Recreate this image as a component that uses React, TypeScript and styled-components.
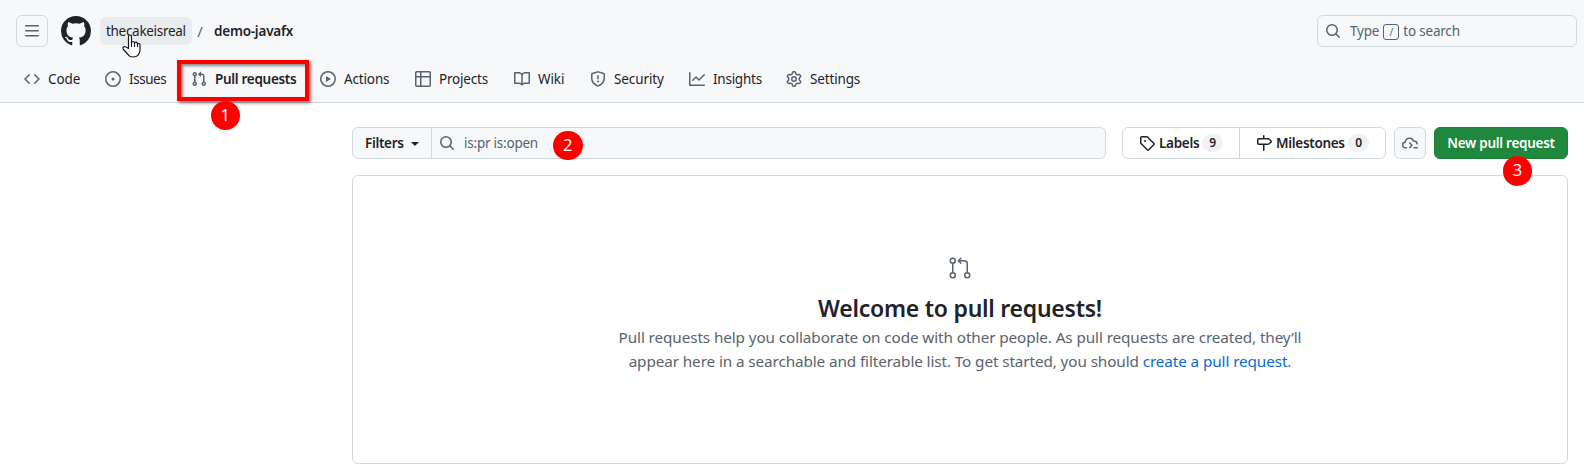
import React from 'react';
import styled, { createGlobalStyle } from 'styled-components';
import { GoGitPullRequest } from 'react-icons/go';

const GlobalStyle = createGlobalStyle`
  * { box-sizing: border-box; }
  body {
    margin: 0;
    background: #fff;
    color: #1f2328;
    font: 13.5px/21px "Noto Sans", "Open Sans", sans-serif;
    overflow: hidden;
  }
`;

const paths = {
  bars: 'M1 2.75A.75.75 0 0 1 1.75 2h12.5a.75.75 0 0 1 0 1.5H1.75A.75.75 0 0 1 1 2.75Zm0 5A.75.75 0 0 1 1.75 7h12.5a.75.75 0 0 1 0 1.5H1.75A.75.75 0 0 1 1 7.75ZM1.75 12h12.5a.75.75 0 0 1 0 1.5H1.75a.75.75 0 0 1 0-1.5Z',
  github: 'M8 0c4.42 0 8 3.58 8 8a8.013 8.013 0 0 1-5.45 7.59c-.4.08-.55-.17-.55-.38 0-.27.01-1.13.01-2.2 0-.75-.25-1.23-.54-1.48 1.78-.2 3.65-.88 3.65-3.95 0-.88-.31-1.59-.82-2.15.08-.2.36-1.02-.08-2.12 0 0-.67-.22-2.2.82-.64-.18-1.32-.27-2-.27-.68 0-1.36.09-2 .27-1.53-1.03-2.2-.82-2.2-.82-.44 1.1-.16 1.92-.08 2.12-.51.56-.82 1.28-.82 2.15 0 3.06 1.86 3.75 3.64 3.95-.23.2-.44.55-.51 1.07-.46.21-1.61.55-2.33-.66-.15-.24-.6-.83-1.23-.82-.67.01-.27.38.01.53.34.19.73.9.82 1.13.16.45.68 1.31 2.69.94 0 .67.01 1.3.01 1.49 0 .21-.15.45-.55.38A7.995 7.995 0 0 1 0 8c0-4.42 3.58-8 8-8Z',
  code: 'm11.28 3.22 4.25 4.25a.75.75 0 0 1 0 1.06l-4.25 4.25a.749.749 0 0 1-1.275-.326.749.749 0 0 1 .215-.734L13.94 8l-3.72-3.72a.749.749 0 0 1 .326-1.275.749.749 0 0 1 .734.215Zm-6.56 0a.751.751 0 0 1 1.042.018.751.751 0 0 1 .018 1.042L2.06 8l3.72 3.72a.749.749 0 0 1-.326 1.275.749.749 0 0 1-.734-.215L.47 8.53a.75.75 0 0 1 0-1.06Z',
  issue: 'M8 9.5a1.5 1.5 0 1 0 0-3 1.5 1.5 0 0 0 0 3ZM8 0a8 8 0 1 1 0 16A8 8 0 0 1 8 0ZM1.5 8a6.5 6.5 0 1 0 13 0 6.5 6.5 0 0 0-13 0Z',
  pull: 'M1.5 3.25a2.25 2.25 0 1 1 3 2.122v5.256a2.251 2.251 0 1 1-1.5 0V5.372A2.25 2.25 0 0 1 1.5 3.25Zm5.677-.177L9.573.677A.25.25 0 0 1 10 .854V2.5h1A2.5 2.5 0 0 1 13.5 5v5.628a2.251 2.251 0 1 1-1.5 0V5a1 1 0 0 0-1-1h-1v1.646a.25.25 0 0 1-.427.177L7.177 3.427a.25.25 0 0 1 0-.354ZM3.75 2.5a.75.75 0 1 0 0 1.5.75.75 0 0 0 0-1.5Zm0 9.5a.75.75 0 1 0 0 1.5.75.75 0 0 0 0-1.5Zm8.25.75a.75.75 0 1 0 1.5 0 .75.75 0 0 0-1.5 0Z',
  play: 'M8 0a8 8 0 1 1 0 16A8 8 0 0 1 8 0ZM1.5 8a6.5 6.5 0 1 0 13 0 6.5 6.5 0 0 0-13 0Zm4.879-2.773 4.264 2.559a.25.25 0 0 1 0 .428l-4.264 2.559A.25.25 0 0 1 6 10.559V5.442a.25.25 0 0 1 .379-.215Z',
  table: 'M0 1.75C0 .784.784 0 1.75 0h12.5C15.216 0 16 .784 16 1.75v12.5A1.75 1.75 0 0 1 14.25 16H1.75A1.75 1.75 0 0 1 0 14.25ZM6.5 6.5v8h7.75a.25.25 0 0 0 .25-.25V6.5Zm8-1.5V1.75a.25.25 0 0 0-.25-.25H6.5V5Zm-13 1.5v7.75c0 .138.112.25.25.25H5v-8ZM5 5V1.5H1.75a.25.25 0 0 0-.25.25V5Z',
  book: 'M0 1.75A.75.75 0 0 1 .75 1h4.253c1.227 0 2.317.59 3 1.501A3.743 3.743 0 0 1 11.006 1h4.245a.75.75 0 0 1 .75.75v10.5a.75.75 0 0 1-.75.75h-4.507a2.25 2.25 0 0 0-1.591.659l-.622.621a.75.75 0 0 1-1.06 0l-.622-.621A2.25 2.25 0 0 0 5.258 13H.75a.75.75 0 0 1-.75-.75Zm7.251 10.324.004-5.073-.002-2.253A2.25 2.25 0 0 0 5.003 2.5H1.5v9h3.757a3.75 3.75 0 0 1 1.994.574ZM8.755 4.75l-.004 7.322a3.752 3.752 0 0 1 1.992-.572H14.5v-9h-3.495a2.25 2.25 0 0 0-2.25 2.25Z',
  shield: 'M7.467.133a1.748 1.748 0 0 1 1.066 0l5.25 1.68A1.75 1.75 0 0 1 15 3.48V7c0 1.566-.32 3.182-1.303 4.682-.983 1.498-2.585 2.813-5.032 3.855a1.697 1.697 0 0 1-1.33 0c-2.447-1.042-4.049-2.357-5.032-3.855C1.32 10.182 1 8.566 1 7V3.48a1.75 1.75 0 0 1 1.217-1.667Zm.61 1.429a.25.25 0 0 0-.153 0l-5.25 1.68a.25.25 0 0 0-.174.238V7c0 1.358.275 2.666 1.057 3.86.784 1.194 2.121 2.34 4.366 3.297a.196.196 0 0 0 .154 0c2.245-.956 3.582-2.104 4.366-3.298C13.225 9.666 13.5 8.36 13.5 7V3.48a.251.251 0 0 0-.174-.237l-5.25-1.68ZM8.75 4.75v3a.75.75 0 0 1-1.5 0v-3a.75.75 0 0 1 1.5 0ZM9 10.5a1 1 0 1 1-2 0 1 1 0 0 1 2 0Z',
  graph: 'M1.5 1.75V13.5h13.75a.75.75 0 0 1 0 1.5H.75a.75.75 0 0 1-.75-.75V1.75a.75.75 0 0 1 1.5 0Zm14.28 2.53-5.25 5.25a.75.75 0 0 1-1.06 0L7 7.06 4.28 9.78a.751.751 0 0 1-1.042-.018.751.751 0 0 1-.018-1.042l3.25-3.25a.75.75 0 0 1 1.06 0L10 7.94l4.72-4.72a.751.751 0 0 1 1.042.018.751.751 0 0 1 .018 1.042Z',
  gear: 'M8 0a8.2 8.2 0 0 1 .701.031C9.444.095 9.99.645 10.16 1.29l.288 1.107c.018.066.079.158.212.224.231.114.454.243.668.386.123.082.233.09.299.071l1.103-.303c.644-.176 1.392.021 1.82.63.27.385.506.792.704 1.218.315.675.111 1.422-.364 1.891l-.814.806c-.049.048-.098.147-.088.294.016.257.016.515 0 .772-.01.147.038.246.088.294l.814.806c.475.469.679 1.216.364 1.891a7.977 7.977 0 0 1-.704 1.217c-.428.61-1.176.807-1.82.63l-1.102-.302c-.067-.019-.177-.011-.3.071a5.909 5.909 0 0 1-.668.386c-.133.066-.194.158-.211.224l-.29 1.106c-.168.646-.715 1.196-1.458 1.26a8.006 8.006 0 0 1-1.402 0c-.743-.064-1.289-.614-1.458-1.26l-.289-1.106c-.018-.066-.079-.158-.212-.224a5.738 5.738 0 0 1-.668-.386c-.123-.082-.233-.09-.299-.071l-1.103.303c-.644.176-1.392-.021-1.82-.63a8.12 8.12 0 0 1-.704-1.218c-.315-.675-.111-1.422.363-1.891l.815-.806c.05-.048.098-.147.088-.294a6.214 6.214 0 0 1 0-.772c.01-.147-.038-.246-.088-.294l-.815-.806C.635 6.045.431 5.298.746 4.623a7.92 7.92 0 0 1 .704-1.217c.428-.61 1.176-.807 1.82-.63l1.102.302c.067.019.177.011.3-.071.214-.143.437-.272.668-.386.133-.066.194-.158.211-.224l.29-1.106C6.009.645 6.556.095 7.299.03 7.53.01 7.764 0 8 0Zm-.571 1.525c-.036.003-.108.036-.137.146l-.289 1.105c-.147.561-.549.967-.998 1.189-.173.086-.34.183-.5.29-.417.278-.97.423-1.529.27l-1.103-.303c-.109-.03-.175.016-.195.045-.22.312-.412.644-.573.99-.014.031-.021.11.059.19l.815.806c.411.406.562.957.53 1.456a4.709 4.709 0 0 0 0 .582c.032.499-.119 1.05-.53 1.456l-.815.806c-.081.08-.073.159-.059.19.162.346.353.677.573.989.02.03.085.076.195.046l1.102-.303c.56-.153 1.113-.008 1.53.27.161.107.328.204.501.29.447.222.85.629.997 1.189l.289 1.105c.029.109.101.143.137.146a6.6 6.6 0 0 0 1.142 0c.036-.003.108-.036.137-.146l.289-1.105c.147-.561.549-.967.998-1.189.173-.086.34-.183.5-.29.417-.278.97-.423 1.529-.27l1.103.303c.109.029.175-.016.195-.045.22-.313.411-.644.573-.99.014-.031.021-.11-.059-.19l-.815-.806c-.411-.406-.562-.957-.53-1.456a4.709 4.709 0 0 0 0-.582c-.032-.499.119-1.05.53-1.456l.815-.806c.081-.08.073-.159.059-.19a6.464 6.464 0 0 0-.573-.989c-.02-.03-.085-.076-.195-.046l-1.102.303c-.56.153-1.113.008-1.53-.27a4.44 4.44 0 0 0-.501-.29c-.447-.222-.85-.629-.997-1.189l-.289-1.105c-.029-.11-.101-.143-.137-.146a6.6 6.6 0 0 0-1.142 0ZM11 8a3 3 0 1 1-6 0 3 3 0 0 1 6 0ZM9.5 8a1.5 1.5 0 1 0-3.001.001A1.5 1.5 0 0 0 9.5 8Z',
  search: 'M10.68 11.74a6 6 0 0 1-7.922-8.982 6 6 0 0 1 8.982 7.922l3.04 3.04a.749.749 0 0 1-.326 1.275.749.749 0 0 1-.734-.215ZM11.5 7a4.499 4.499 0 1 0-8.997 0A4.499 4.499 0 0 0 11.5 7Z',
  tag: 'M1 7.775V2.75C1 1.784 1.784 1 2.75 1h5.025c.464 0 .91.184 1.238.513l6.25 6.25a1.75 1.75 0 0 1 0 2.474l-5.026 5.026a1.75 1.75 0 0 1-2.474 0l-6.25-6.25A1.752 1.752 0 0 1 1 7.775Zm1.5 0c0 .066.026.13.073.177l6.25 6.25a.25.25 0 0 0 .354 0l5.025-5.025a.25.25 0 0 0 0-.354l-6.25-6.25a.25.25 0 0 0-.177-.073H2.75a.25.25 0 0 0-.25.25ZM6 5a1 1 0 1 1 0 2 1 1 0 0 1 0-2Z',
  milestone: 'M7.75 0a.75.75 0 0 1 .75.75V3h3.634c.414 0 .814.147 1.13.414l2.07 1.75a1.75 1.75 0 0 1 0 2.672l-2.07 1.75a1.75 1.75 0 0 1-1.13.414H8.5v5.25a.75.75 0 0 1-1.5 0V10H2.75A1.75 1.75 0 0 1 1 8.25v-3.5C1 3.784 1.784 3 2.75 3H7V.75A.75.75 0 0 1 7.75 0Zm4.384 8.5a.25.25 0 0 0 .161-.06l2.07-1.75a.248.248 0 0 0 0-.38l-2.07-1.75a.25.25 0 0 0-.161-.06H2.75a.25.25 0 0 0-.25.25v3.5c0 .138.112.25.25.25h9.384Z',
  caret: 'm4.427 7.427 3.396 3.396a.25.25 0 0 0 .354 0l3.396-3.396A.25.25 0 0 0 11.396 7H4.604a.25.25 0 0 0-.177.427Z',
};

type IconName = keyof typeof paths;

const Svg = styled.svg`
  display: block;
  flex: none;
`;

const Icon = ({ name, size = 16 }: { name: IconName; size?: number }) => (
  <Svg width={size} height={size} viewBox="0 0 16 16" fill="currentColor">
    <path d={paths[name]} />
  </Svg>
);

const Header = styled.header`
  height: 103px;
  background: #f6f8fa;
  border-bottom: 1px solid #d1d9e0;
`;

const TopBar = styled.div`
  display: flex;
  align-items: center;
  height: 62px;
  padding: 0 7px 0 16px;
`;

const SquareButton = styled.button`
  display: flex;
  align-items: center;
  justify-content: center;
  flex: none;
  width: 32px;
  height: 32px;
  padding: 0;
  border: 1px solid #d1d9e0;
  border-radius: 6px;
  background: #f6f8fa;
  color: #59636e;
`;

const Logo = styled.a`
  margin: 0 9px 0 12px;
  padding-left: 1px;
`;

const Owner = styled.a`
  position: relative;
  width: 92px;
  height: 28px;
  padding: 0 6px;
  border-radius: 6px;
  background: #e9ecef;
  line-height: 29px;
  white-space: nowrap;
  letter-spacing: -0.3px;
`;

const Slash = styled.span`
  width: 22px;
  text-align: center;
  color: #59636e;
  padding-right: 6px;
  font-size: 15px;
`;

const Repo = styled.a`
  font-weight: 600;
  letter-spacing: -0.22px;
  white-space: nowrap;
`;

const Pointer = styled.svg`
  position: absolute;
  left: 22px;
  top: 17px;
`;

const GlobalSearch = styled.div`
  display: flex;
  align-items: center;
  width: 260px;
  height: 32px;
  margin-left: auto;
  padding: 0 7px;
  border: 1px solid #d1d9e0;
  border-radius: 6px;
  color: #59636e;
  letter-spacing: -0.2px;
  white-space: pre;
`;

const SearchHint = styled.span`
  display: flex;
  align-items: center;
  margin-left: 9px;
`;

const Key = styled.kbd`
  width: 16px;
  height: 16px;
  margin: 1px 4px 0;
  border: 1px solid #59636e;
  border-radius: 3px;
  font: 10px/14px "Noto Sans", sans-serif;
  text-align: center;
`;

const Nav = styled.nav`
  display: flex;
  gap: 8px;
  height: 34px;
  padding: 0 16px;
  align-items: center;
`;

const Tab = styled.a<{ $active?: boolean }>`
  position: relative;
  display: flex;
  align-items: center;
  gap: 8px;
  height: 32px;
  padding: 0 8px;
  font-weight: ${(p) => (p.$active ? 600 : 400)};
  svg { color: #59636e; }
`;

const TabLabel = styled.span<{ $width: number; $spacing: number }>`
  width: ${(p) => p.$width}px;
  letter-spacing: ${(p) => p.$spacing}px;
  white-space: nowrap;
`;

const Highlight = styled.span`
  position: absolute;
  left: -6px;
  top: -3px;
  width: 132px;
  height: 41px;
  border: 4px solid #f00;
  box-shadow: 2px 2px 3px rgba(0, 0, 0, 0.5), inset 2px 2px 3px rgba(0, 0, 0, 0.45);
`;

const Step = styled.span<{ $x: number; $y: number }>`
  position: absolute;
  left: ${(p) => p.$x}px;
  top: ${(p) => p.$y}px;
  z-index: 2;
  width: 29.5px;
  height: 29.5px;
  border-radius: 50%;
  background: #f00;
  color: #fff;
  font: 400 16.5px/28px "Noto Sans", sans-serif;
  letter-spacing: 0;
  text-align: center;
`;

const Main = styled.main`
  margin-left: 352px;
  padding: 24px 16px 0 0;
`;

const Toolbar = styled.div`
  display: flex;
  height: 32px;
`;

const FilterGroup = styled.div`
  position: relative;
  display: flex;
  width: 754px;
  border: 1px solid #d1d9e0;
  border-radius: 6px;
  background: #f6f8fa;
`;

const FilterButton = styled.div`
  display: flex;
  align-items: center;
  justify-content: space-between;
  width: 79px;
  padding: 0 8px 0 12px;
  border-right: 1px solid #d1d9e0;
  font-weight: 600;
  letter-spacing: -0.33px;
`;

const FilterInput = styled.div`
  display: flex;
  align-items: center;
  gap: 9px;
  padding-left: 7px;
  color: #59636e;
  letter-spacing: -0.23px;
`;

const LinkGroup = styled.div`
  display: flex;
  width: 264px;
  margin: 0 8px 0 16px;
  border: 1px solid #d1d9e0;
  border-radius: 6px;
`;

const GroupLink = styled.a<{ $width: number }>`
  display: flex;
  align-items: center;
  width: ${(p) => p.$width}px;
  padding-left: 16px;
  font-weight: 600;
  letter-spacing: -0.3px;
  white-space: nowrap;
  & + & { border-left: 1px solid #d1d9e0; }
`;

const LinkText = styled.span<{ $width: number }>`
  width: ${(p) => p.$width}px;
  margin: 0 4px;
`;

const Counter = styled.span`
  width: 21px;
  height: 18px;
  border-radius: 9px;
  background: #eff1f3;
  font-size: 12px;
  line-height: 18px;
  text-align: center;
`;

const PrimaryButton = styled.button`
  position: relative;
  width: 134px;
  height: 32px;
  margin-left: 8px;
  padding: 0;
  border: 1px solid #1f7f39;
  border-radius: 6px;
  background: #1f883d;
  color: #fff;
  font: 600 13.5px/30px "Noto Sans", sans-serif;
  letter-spacing: -0.27px;
  white-space: nowrap;
`;

const Blank = styled.section`
  display: flex;
  flex-direction: column;
  align-items: center;
  height: 289px;
  margin-top: 16px;
  padding-top: 80px;
  border: 1px solid #d1d9e0;
  border-radius: 6px;
  color: #59636e;
`;

const Title = styled.h3`
  margin: 10px 0 0;
  color: #1f2328;
  font-size: 23px;
  line-height: 36px;
  font-weight: 600;
  letter-spacing: -0.25px;
`;

const Text = styled.p<{ $spacing: number }>`
  margin: 0;
  font-size: 15.3px;
  line-height: 24px;
  letter-spacing: ${(p) => p.$spacing}px;
  white-space: nowrap;
  ${Title} + & { margin-top: -1px; }
`;

const TextLink = styled.a`
  color: #0969da;
`;

const tabs: { icon: IconName; label: string; width: number; spacing: number }[] = [
  { icon: 'code', label: 'Code', width: 33, spacing: -0.1 },
  { icon: 'issue', label: 'Issues', width: 38, spacing: -0.45 },
  { icon: 'pull', label: 'Pull requests', width: 81, spacing: -0.3 },
  { icon: 'play', label: 'Actions', width: 47, spacing: -0.15 },
  { icon: 'table', label: 'Projects', width: 51, spacing: -0.2 },
  { icon: 'book', label: 'Wiki', width: 28, spacing: -0.1 },
  { icon: 'shield', label: 'Security', width: 51, spacing: -0.1 },
  { icon: 'graph', label: 'Insights', width: 49, spacing: -0.25 },
  { icon: 'gear', label: 'Settings', width: 52, spacing: -0.15 },
];

const HandCursor = () => (
  <Pointer width="19" height="24" viewBox="0 0 19 24">
    <path
      d="M6.5 14.5V3Q6.5 1 8 1T9.5 3v6q0-1.500 1.500-1.500T12.500 9.500q0-1.300 1.500-1.300T15.500 10.500q0-1 1.300-1T18 11.500V16q0 2-1.500 4.500Q15 23 11 23 7.500 23 6 20.500L1.500 15.500Q.5 14 1.500 13T4 13Z"
      fill="#fff"
      stroke="#15171c"
      strokeWidth="1.2"
      strokeLinejoin="round"
    />
    <path d="M9.500 8v5M12.500 9.500V13M15.500 10.500V13" stroke="#15171c" strokeWidth="1.1" />
  </Pointer>
);

const CloudPrompt = () => (
  <Svg width="16" height="16" viewBox="0 0 16 16" fill="none" stroke="currentColor" strokeWidth="1.5" strokeLinecap="round" strokeLinejoin="round">
    <path d="M4.500 12.700H3.500A2.750 2.750 0 0 1 3.200 7.200 4.300 4.300 0 0 1 11.500 6 3.600 3.600 0 0 1 15.200 8.700" />
    <path d="m7.800 8 2.200 2.300-2.200 2.300M12 12.700h3.200" />
  </Svg>
);

export default function App() {
  return (
    <>
      <GlobalStyle />
      <Header>
        <TopBar>
          <SquareButton><Icon name="bars" /></SquareButton>
          <Logo><Icon name="github" size={30} /></Logo>
          <Owner>thecakeisreal<HandCursor /></Owner>
          <Slash>/</Slash>
          <Repo>demo-javafx</Repo>
          <GlobalSearch>
            <Icon name="search" />
            <SearchHint>Type<Key>/</Key>to search</SearchHint>
          </GlobalSearch>
        </TopBar>
        <Nav>
          {tabs.map((t) => (
            <Tab key={t.label} $active={t.icon === 'pull'}>
              <Icon name={t.icon} />
              <TabLabel $width={t.width} $spacing={t.spacing}>{t.label}</TabLabel>
              {t.icon === 'pull' && <><Highlight /><Step $x={27.5} $y={37.5}>1</Step></>}
            </Tab>
          ))}
        </Nav>
      </Header>
      <Main>
        <Toolbar>
          <FilterGroup>
            <FilterButton>Filters<Icon name="caret" /></FilterButton>
            <FilterInput><Icon name="search" />is:pr is:open</FilterInput>
            <Step $x={200} $y={2.8}>2</Step>
          </FilterGroup>
          <LinkGroup>
            <GroupLink $width={116}>
              <Icon name="tag" /><LinkText $width={39}>Labels</LinkText><Counter>9</Counter>
            </GroupLink>
            <GroupLink $width={146}>
              <Icon name="milestone" /><LinkText $width={68}>Milestones</LinkText><Counter>0</Counter>
            </GroupLink>
          </LinkGroup>
          <SquareButton><CloudPrompt /></SquareButton>
          <PrimaryButton>New pull request<Step $x={67.7} $y={28}>3</Step></PrimaryButton>
        </Toolbar>
        <Blank>
          <GoGitPullRequest size={24} />
          <Title>Welcome to pull requests!</Title>
          <Text $spacing={-0.11}>Pull requests help you collaborate on code with other people. As pull requests are created, they’ll</Text>
          <Text $spacing={-0.11}>appear here in a searchable and filterable list. To get started, you should <TextLink>create a pull request</TextLink>.</Text>
        </Blank>
      </Main>
    </>
  );
}
